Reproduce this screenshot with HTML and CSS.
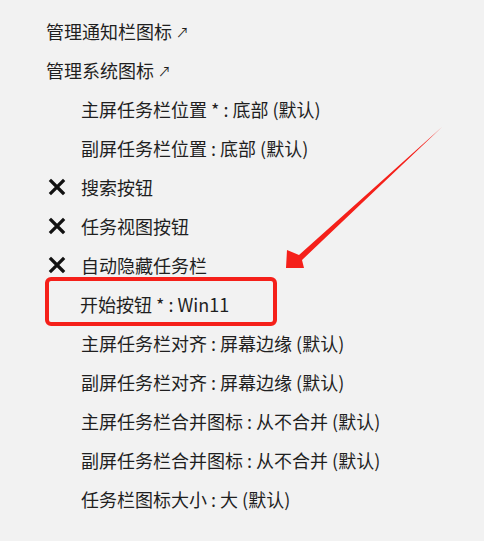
FILE: index.html
```html
<!DOCTYPE html>
<html lang="zh-CN">
<head>
    <meta charset="UTF-8">
    <meta name="viewport" content="width=device-width, initial-scale=1.0">
    <title>任务栏设置</title>
    <link rel="stylesheet" href="styles.css">
</head>
<body>
    <div class="list">
        <div class="item">管理通知栏图标<span class="ext">↗</span></div>
        <div class="item">管理系统图标<span class="ext">↗</span></div>
        <div class="item sub">主屏任务栏位置 * : 底部 (默认)</div>
        <div class="item sub">副屏任务栏位置 : 底部 (默认)</div>
        <div class="item"><span class="icon"><svg width="18" height="18" viewBox="0 0 18 18"><path d="M3 3 L15 15 M15 3 L3 15" stroke="#111" stroke-width="3.2" stroke-linecap="square"/></svg></span><span>搜索按钮</span></div>
        <div class="item"><span class="icon"><svg width="18" height="18" viewBox="0 0 18 18"><path d="M3 3 L15 15 M15 3 L3 15" stroke="#111" stroke-width="3.2" stroke-linecap="square"/></svg></span><span>任务视图按钮</span></div>
        <div class="item"><span class="icon"><svg width="18" height="18" viewBox="0 0 18 18"><path d="M3 3 L15 15 M15 3 L3 15" stroke="#111" stroke-width="3.2" stroke-linecap="square"/></svg></span><span>自动隐藏任务栏</span></div>
        <div class="item sub marked">开始按钮 * : Win11</div>
        <div class="item sub">主屏任务栏对齐 : 屏幕边缘 (默认)</div>
        <div class="item sub">副屏任务栏对齐 : 屏幕边缘 (默认)</div>
        <div class="item sub">主屏任务栏合并图标 : 从不合并 (默认)</div>
        <div class="item sub">副屏任务栏合并图标 : 从不合并 (默认)</div>
        <div class="item sub">任务栏图标大小 : 大 (默认)</div>
    </div>
    <svg class="pointer" width="484" height="541" viewBox="0 0 484 541">
        <polygon points="442,127 299,255 287,250 286,268 304,268 302,260" fill="#f5201a"/>
    </svg>
</body>
</html>
```

FILE: styles.css
```css
* {
    margin: 0;
    padding: 0;
    box-sizing: border-box;
}

body {
    background-color: #f2f2f2;
    color: #1f1f1f;
    font-family: "Noto Sans CJK SC", "Microsoft YaHei", sans-serif;
    font-size: 18px;
    width: 484px;
    height: 541px;
    overflow: hidden;
    position: relative;
}

.list {
    padding: 11px 0 0 46px;
}

.item {
    height: 39px;
    display: flex;
    align-items: center;
    white-space: nowrap;
}

.sub {
    padding-left: 35px;
}

.icon {
    width: 35px;
    display: flex;
    align-items: center;
    padding-left: 2px;
}

.ext {
    font-size: 13px;
    margin-left: 4px;
    position: relative;
    top: 1px;
}

.marked {
    height: 49px;
    width: 232px;
    margin: -7px 0 -3px -1px;
    padding: 5px 0 0 31px;
    border: 4px solid #f5201a;
    border-radius: 6px;
}

.pointer {
    position: absolute;
    top: 0;
    left: 0;
}
```
